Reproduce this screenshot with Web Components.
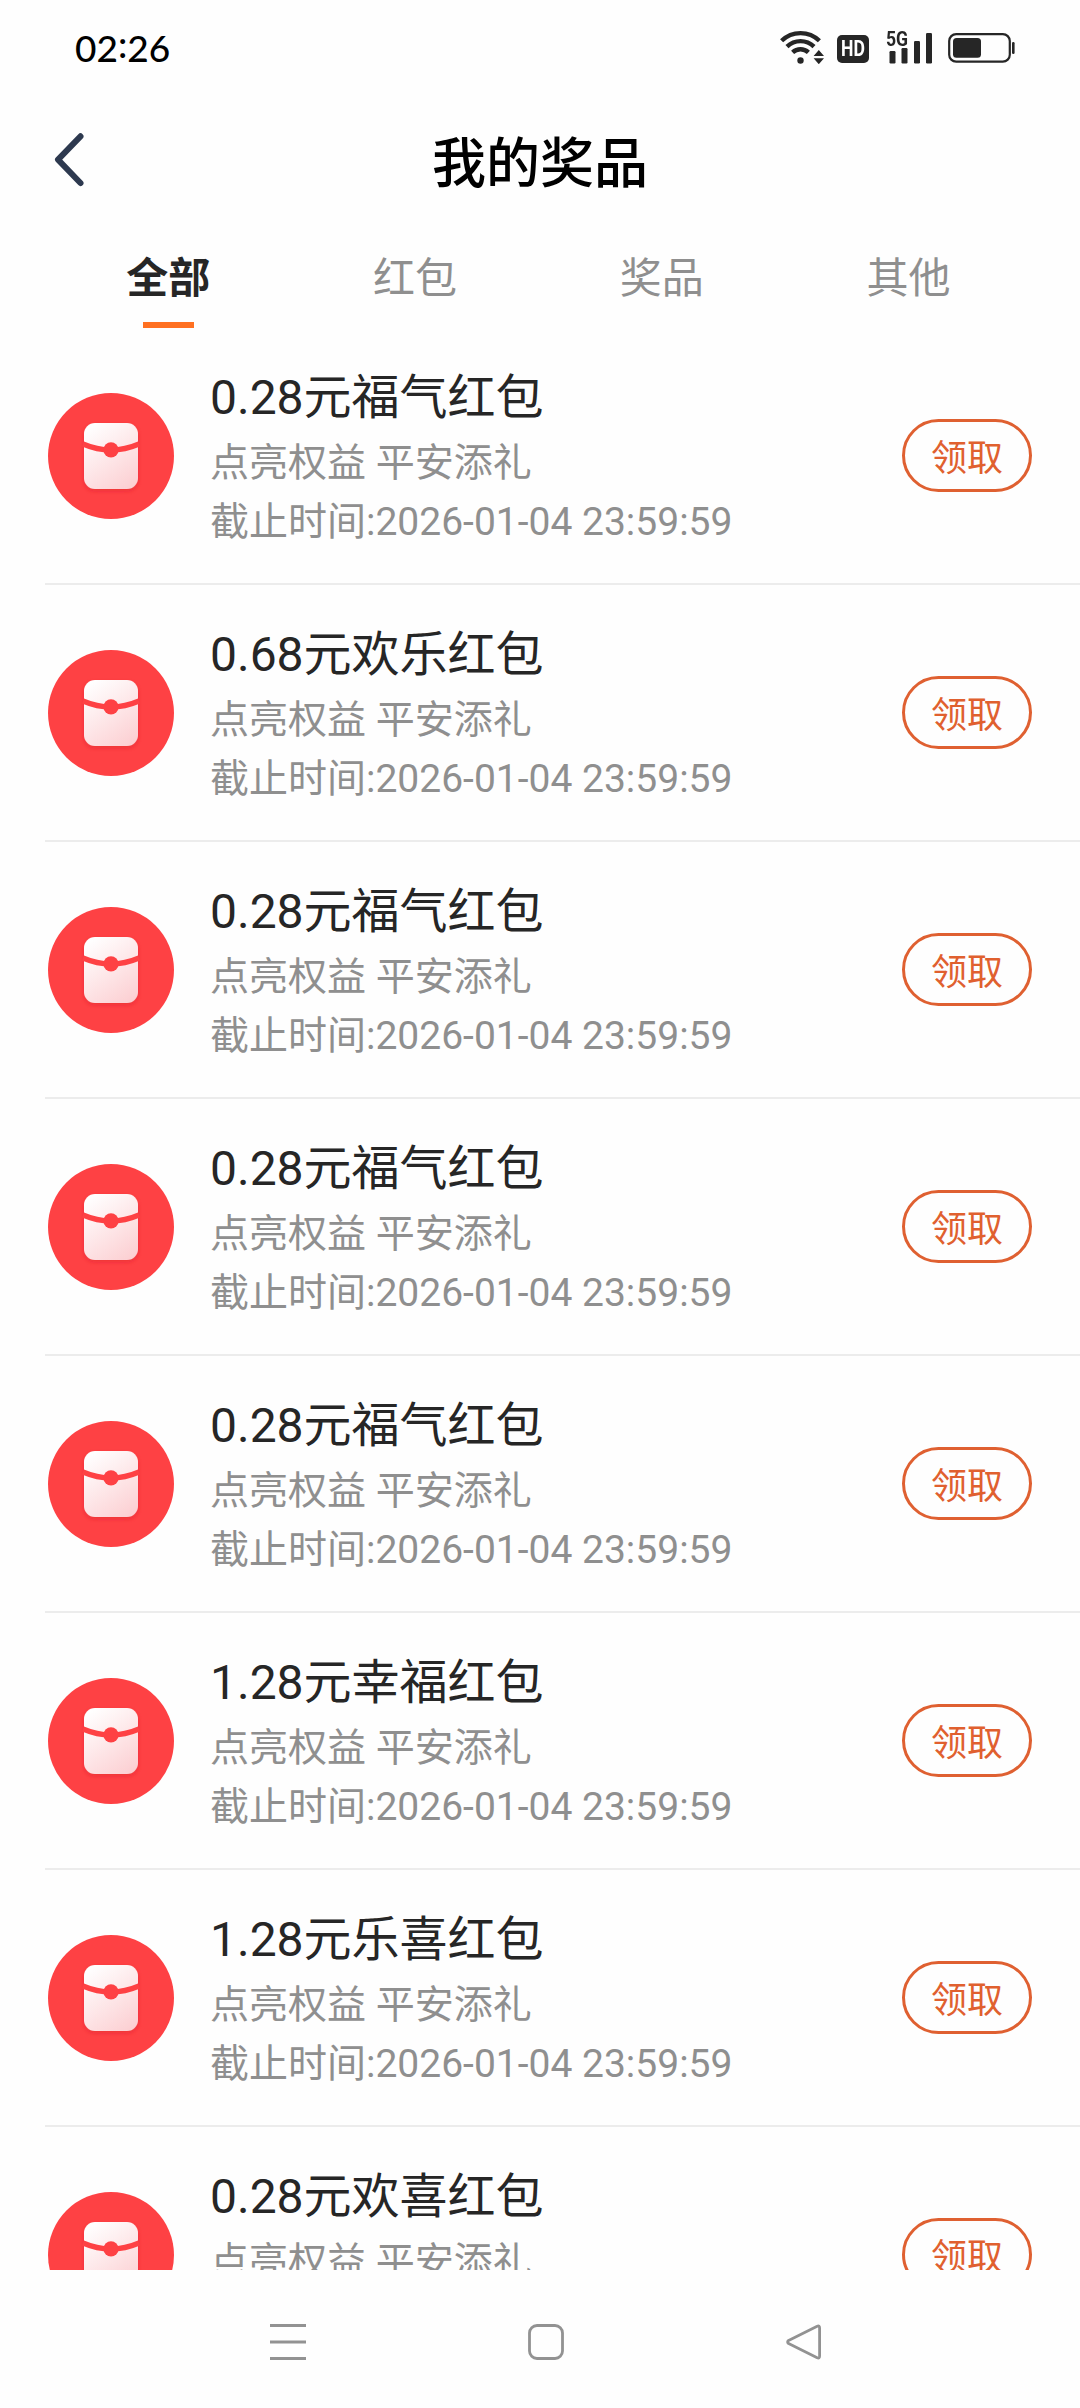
<!DOCTYPE html>
<html lang="zh-CN">
<head>
<meta charset="utf-8">
<title>我的奖品</title>
<style>
html,body{margin:0;padding:0;background:#fefefe}
body{width:1080px;height:2408px;overflow:hidden;font-family:Roboto,"Noto Sans CJK SC",sans-serif}
</style>
</head>
<body>
<prize-app></prize-app>
<script>
const define = (name, html) => customElements.define(name, class extends HTMLElement {
  constructor() {
    super();
    const t = document.createElement('template');
    t.innerHTML = html;
    this.attachShadow({mode: 'open'}).append(t.content.cloneNode(true));
  }
});

define('status-bar', `
<style>
:host{display:flex;justify-content:space-between;height:96px;padding:0 65px 0 75px;box-sizing:border-box}
.time{font:500 37px/52px Lato,sans-serif;color:#000;padding-top:22px;height:52px;white-space:nowrap}
.time span{position:relative;top:-4px}
.icons{display:flex;align-items:flex-start;padding-top:30px;color:#262626}
svg{display:block;flex:none}
.hd{width:32px;height:28px;margin:5px 17px 0 13px;border-radius:5px;background:#262626;color:#fff;display:flex;align-items:center;justify-content:center;font:700 22px/28px Roboto,sans-serif}
.hd span{transform:scaleX(.8)}
.sig{width:46px;height:34px;margin-right:16px;position:relative}
.sig b{position:absolute;left:-.5px;top:-1px;font:700 20px/20px Roboto,sans-serif;transform:scaleX(.88);transform-origin:0 0}
</style>
<div class="time">02<span>:</span>26</div>
<div class="icons">
<svg width="44" height="34" viewBox="0 0 44 34" fill="none" stroke="#262626" stroke-width="4.4">
<path d="M1.6 10.8A27 27 0 0 1 39.4 10.8M7 16.6A19.5 19.5 0 0 1 34 16.6M12.6 22.4A11.5 11.5 0 0 1 28.4 22.4"/>
<circle cx="20.5" cy="30.5" r="3.2" fill="#262626" stroke="none"/>
<path d="M38.8 20l5.2 6H33.6zM38.8 34.2l5.2-6H33.6z" fill="#262626" stroke="none"/></svg>
<div class="hd"><span>HD</span></div>
<div class="sig"><b>5G</b><svg width="46" height="34" fill="#262626"><rect x="3.5" y="21" width="6" height="12.5" rx="1.2"/><rect x="15.5" y="18" width="6" height="15.5" rx="1.2"/><rect x="28" y="11" width="6" height="22.5" rx="1.2"/><rect x="40" y="3" width="6" height="30.5" rx="1.2"/></svg></div>
<svg width="67" height="34"><rect x="1.2" y="4.1" width="60.6" height="27.6" rx="7" fill="none" stroke="#262626" stroke-width="2.2"/><rect x="5" y="8" width="28" height="19.7" rx="3.5" fill="#262626"/><rect x="64" y="12" width="2.6" height="12" rx="1.2" fill="#262626"/></svg>
</div>`);

define('page-header', `
<style>
:host{display:grid;grid-template-columns:84px 1fr 84px;align-items:center;height:128px}
svg{display:block;margin-left:52px}
h1{margin:0;text-align:center;font:500 54px/80px "Noto Sans CJK SC",sans-serif;color:#000}
</style>
<svg width="36" height="58" viewBox="0 0 36 58" fill="none" stroke="#2d394f" stroke-width="6" stroke-linecap="round" stroke-linejoin="round"><path d="M28.5 5.3L6 28.6L28.5 52"/></svg>
<h1><slot></slot></h1><i></i>`);

define('prize-tab', `
<style>
:host{flex:1;display:flex;flex-direction:column;align-items:center;height:104px;font:400 42px/60px "Noto Sans CJK SC",sans-serif;color:#8f8f8f}
span{margin-top:21px;height:60px}
i{width:51px;height:6px;margin-top:17px}
:host([active]){color:#262626;font-weight:700}
:host([active]) i{background:#ff7021}
</style><span><slot></slot></span><i></i>`);

define('prize-tabs', `<style>:host{display:flex;padding:0 48px 0 45px;height:104px}</style><slot></slot>`);

define('packet-icon', `
<style>:host{display:block;width:126px;height:126px;flex:none}svg{display:block}</style>
<svg width="126" height="126" viewBox="0 0 126 126">
<defs><linearGradient id="g" x1=".2" y1="0" x2=".8" y2="1"><stop offset="0" stop-color="#fff"/><stop offset="1" stop-color="#fcd0d3"/></linearGradient>
<filter id="s" x="-20%" y="-20%" width="140%" height="140%"><feDropShadow dx="0" dy="2" stdDeviation="2" flood-color="#d51f28" flood-opacity=".4"/></filter></defs>
<circle cx="63" cy="63" r="63" fill="#fe4144"/>
<rect x="36" y="30" width="54" height="66" rx="11" fill="url(#g)" filter="url(#s)"/>
<path d="M35 51Q63 63 91 51" fill="none" stroke="#fe4144" stroke-width="5.2"/>
<circle cx="63" cy="56.8" r="7.6" fill="#fe4144"/></svg>`);

define('claim-button', `
<style>
:host{display:block;flex:none}
button{display:block;width:130px;height:73px;box-sizing:border-box;padding:0 0 1px;border:3px solid #df6031;border-radius:37px;background:none;color:#e0602f;font:400 36px/66px "Noto Sans CJK SC",sans-serif}
</style><button><slot></slot></button>`);

define('prize-row', `
<style>
:host{display:flex;align-items:center;box-sizing:border-box;height:257px;margin-left:45px;padding:0 48px 0 3px;border-bottom:2px solid #ececec}
.text{flex:1;margin-left:36px;align-self:flex-start;padding-top:40px;white-space:nowrap;font-size:39px;line-height:60px;color:#8f8f8f}
.name{font-size:48px;color:#262626;margin-bottom:5px}
</style>
<packet-icon></packet-icon>
<div class="text"><div class="name"><slot></slot></div><div><slot name="note"></slot></div><div style="margin-top:-1px"><slot name="due"></slot></div></div>
<claim-button>领取</claim-button>`);

define('prize-list', `<style>:host{display:block;height:1942px;overflow:hidden}</style><slot></slot>`);

define('nav-bar', `
<style>:host{display:flex;justify-content:space-between;height:138px;padding:54px 258px 0 270px;box-sizing:border-box}svg{display:block}</style>
<svg width="36" height="36" fill="#929292"><path d="M0 0h36v3H0zM0 16.5h36v3H0zM0 33h36v3H0z"/></svg>
<svg width="36" height="36" fill="none" stroke="#929292" stroke-width="2.8"><rect x="1.5" y="1.5" width="33" height="33" rx="7.5"/></svg>
<svg width="36" height="36" fill="none" stroke="#929292" stroke-width="2.8" stroke-linejoin="round"><path d="M31.2 2.2Q33.6 1.1 33.6 4V32Q33.6 34.9 31.2 33.8L2.6 19.6Q.6 18 2.6 16.4Z"/></svg>`);

define('prize-app', `
<style>:host{display:flex;flex-direction:column;width:1080px;height:2408px}</style>
<status-bar></status-bar>
<page-header>我的奖品</page-header>
<prize-tabs><prize-tab active>全部</prize-tab><prize-tab>红包</prize-tab><prize-tab>奖品</prize-tab><prize-tab>其他</prize-tab></prize-tabs>
<prize-list>${['0.28元福气红包','0.68元欢乐红包','0.28元福气红包','0.28元福气红包','0.28元福气红包','1.28元幸福红包','1.28元乐喜红包','0.28元欢喜红包']
  .map(n => `<prize-row>${n}<span slot="note">点亮权益 平安添礼</span><span slot="due">截止时间:2026-01-04 23:59:59</span></prize-row>`).join('')}</prize-list>
<nav-bar></nav-bar>`);
</script>
</body>
</html>
